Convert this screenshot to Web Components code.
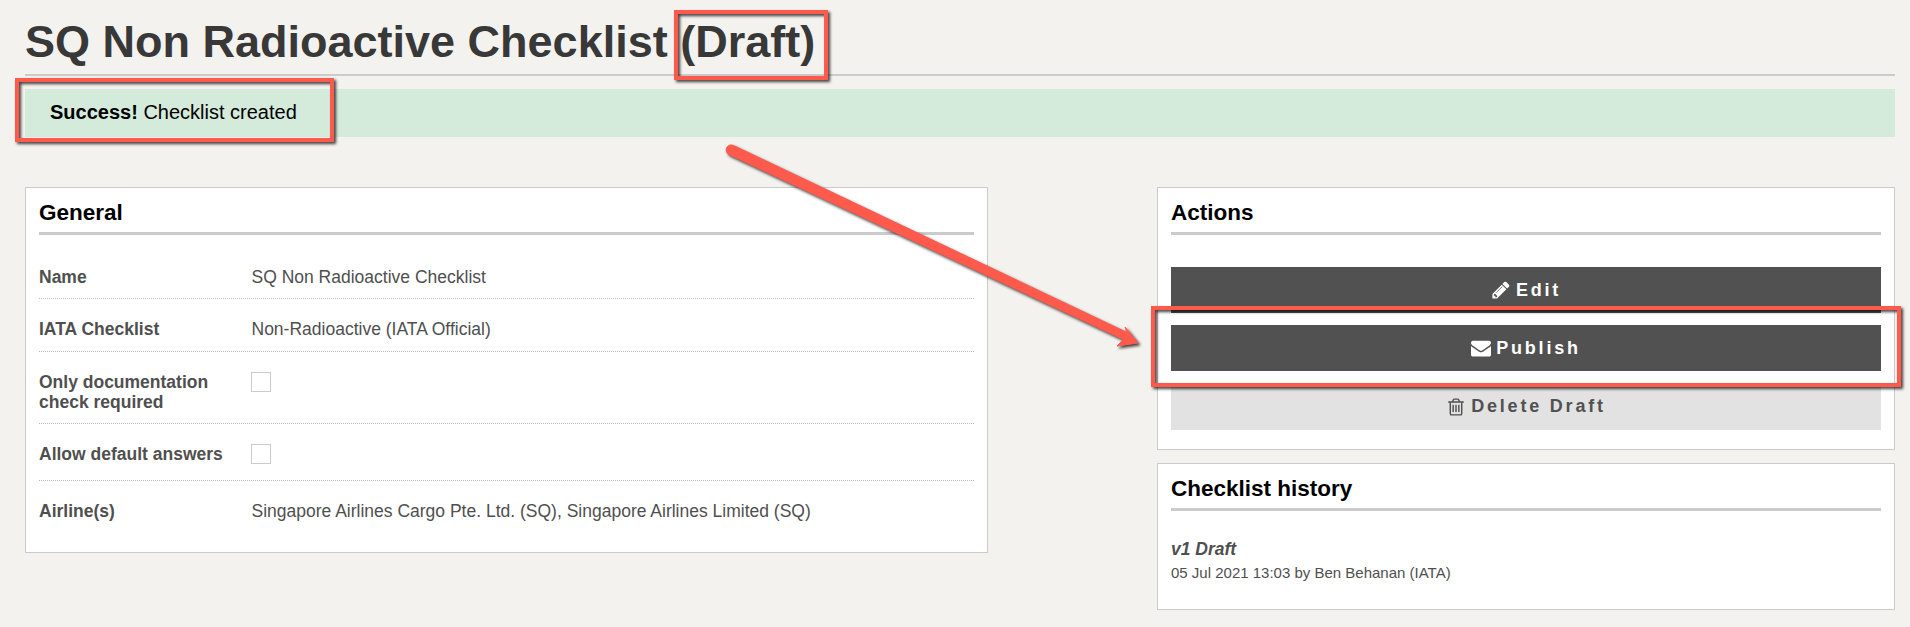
<!DOCTYPE html>
<html lang="en">
<head>
<meta charset="utf-8">
<title>SQ Non Radioactive Checklist</title>
<style>
  html, body { margin: 0; padding: 0; height: 627px; overflow: hidden; }
  body {
    background: #f3f2ee;
    font-family: "Liberation Sans", Arial, sans-serif;
    color: #4f4f4f;
    font-size: 16px;
  }
</style>
</head>
<body>
<checklist-page>
  <page-title>SQ Non Radioactive Checklist (Draft)</page-title>
  <alert-box><b>Success!</b> Checklist created</alert-box>

  <panel-card slot="left" heading="General">
    <detail-row label="Name" tight>SQ Non Radioactive Checklist</detail-row>
    <detail-row label="IATA Checklist">Non-Radioactive (IATA Official)</detail-row>
    <detail-row label="Only documentation check required" tight><check-box></check-box></detail-row>
    <detail-row label="Allow default answers" tall><check-box></check-box></detail-row>
    <detail-row label="Airline(s)" last>Singapore Airlines Cargo Pte. Ltd. (SQ), Singapore Airlines Limited (SQ)</detail-row>
  </panel-card>

  <panel-card slot="right" heading="Actions">
    <div style="height:20px"></div>
    <action-button icon="pencil">Edit</action-button>
    <action-button icon="envelope">Publish</action-button>
    <action-button icon="trash" kind="light">Delete Draft</action-button>
  </panel-card>

  <panel-card slot="right" heading="Checklist history">
    <history-entry version="v1 Draft">05 Jul 2021 13:03 by Ben Behanan (IATA)</history-entry>
  </panel-card>
</checklist-page>
<screenshot-marks></screenshot-marks>

<script>
// Font Awesome 4 style glyphs, viewBox 0 0 1792 1792
const ICONS = {
  pencil: 'M491 1536l91-91-235-235-91 91v107h128v128h107zm523-928q0-22-22-22-10 0-17 7l-542 542q-7 7-7 17 0 22 22 22 10 0 17-7l542-542q7-7 7-17zm-54-192l416 416-832 832h-416v-416zm683 96q0 53-37 90l-166 166-416-416 166-165q36-38 90-38 53 0 91 38l235 234q37 39 37 91z',
  envelope: 'M1792 710v794q0 66-47 113t-113 47h-1472q-66 0-113-47t-47-113v-794q44 49 101 87 362 246 497 345 57 42 92.5 65.5t94.5 48 110 24.5h2q51 0 110-24.5t94.5-48 92.5-65.5q170-123 498-345 57-39 100-87zm0-294q0 79-49 151t-122 123q-376 261-468 325-10 7-42.5 30.5t-54 38-52 32.5-57.5 27-50 9h-2q-23 0-50-9t-57.5-27-52-32.5-54-38-42.5-30.5q-91-64-262-182.5t-205-142.5q-62-42-117-115.5t-55-136.5q0-78 41.5-130t118.5-52h1472q65 0 112.5 47t47.5 113z',
  trash: 'M704 736v576q0 14-9 23t-23 9h-64q-14 0-23-9t-9-23v-576q0-14 9-23t23-9h64q14 0 23 9t9 23zm256 0v576q0 14-9 23t-23 9h-64q-14 0-23-9t-9-23v-576q0-14 9-23t23-9h64q14 0 23 9t9 23zm256 0v576q0 14-9 23t-23 9h-64q-14 0-23-9t-9-23v-576q0-14 9-23t23-9h64q14 0 23 9t9 23zm128 724v-948h-896v948q0 22 7 40.5t14.5 27 10.5 8.5h832q3 0 10.5-8.5t14.5-27 7-40.5zm-672-1076h448l-48-117q-7-9-17-11h-317q-10 2-17 11zm928 32v64q0 14-9 23t-23 9h-96v948q0 83-47 143.5t-113 60.5h-832q-66 0-113-58.5t-47-141.5v-952h-96q-14 0-23-9t-9-23v-64q0-14 9-23t23-9h309l70-167q15-37 54-63t79-26h320q40 0 79 26t54 63l70 167h309q14 0 23 9t9 23z'
};

class ChecklistPage extends HTMLElement {
  constructor() {
    super();
    this.attachShadow({ mode: 'open' });
    this.shadowRoot.innerHTML = `
      <style>
        :host { display: block; padding: 0 15px 0 25px; }
        .cols { display: grid; grid-template-columns: 963px 738px; justify-content: space-between; margin-top: 50px; }
        .col { display: flex; flex-direction: column; gap: 13px; align-items: stretch; }
      </style>
      <slot></slot>
      <div class="cols">
        <div class="col"><slot name="left"></slot></div>
        <div class="col"><slot name="right"></slot></div>
      </div>
    `;
  }
}

class PageTitle extends HTMLElement {
  constructor() {
    super();
    this.attachShadow({ mode: 'open' });
    this.shadowRoot.innerHTML = `
      <style>
        :host {
          display: block;
          height: 74px;
          border-bottom: 2px solid #cbcbcb;
          font-size: 45px;
          font-weight: bold;
          line-height: 84px;
          color: #383838;
          white-space: nowrap;
        }
      </style>
      <slot></slot>
    `;
  }
}

class AlertBox extends HTMLElement {
  constructor() {
    super();
    this.attachShadow({ mode: 'open' });
    this.shadowRoot.innerHTML = `
      <style>
        :host {
          display: block;
          margin-top: 13px;
          height: 48px;
          padding-left: 25px;
          background: #d4ebdb;
          color: #000;
          font-size: 20px;
          line-height: 47px;
        }
      </style>
      <slot></slot>
    `;
  }
}

class PanelCard extends HTMLElement {
  constructor() {
    super();
    this.attachShadow({ mode: 'open' });
    this.shadowRoot.innerHTML = `
      <style>
        :host {
          display: block;
          box-sizing: border-box;
          background: #fff;
          border: 1px solid #cbcbcb;
          padding: 0 13px 19px;
        }
        h2 {
          margin: 0 0 12px;
          height: 44px;
          font-size: 22.5px;
          line-height: 49px;
          font-weight: bold;
          color: #000;
          border-bottom: 3px solid #cbcbcb;
        }
      </style>
      <h2></h2>
      <slot></slot>
    `;
    this.shadowRoot.querySelector('h2').textContent = this.getAttribute('heading');
  }
}

class DetailRow extends HTMLElement {
  constructor() {
    super();
    this.attachShadow({ mode: 'open' });
    this.shadowRoot.innerHTML = `
      <style>
        :host {
          display: grid;
          grid-template-columns: 212.5px 1fr;
          padding: 20px 0 12px;
          border-bottom: 1px dotted #bdbdbd;
          font-size: 17.5px;
          line-height: 20px;
          color: #4f4f4f;
        }
        :host([last]) { border-bottom: 0; }
        :host([tall]) { padding-bottom: 16px; }
        :host([tight]) { padding-bottom: 11px; }
        .label { font-weight: bold; padding-right: 10px; }
      </style>
      <div class="label"></div>
      <div><slot></slot></div>
    `;
    this.shadowRoot.querySelector('.label').textContent = this.getAttribute('label');
  }
}

class CheckBox extends HTMLElement {
  constructor() {
    super();
    this.attachShadow({ mode: 'open' });
    this.shadowRoot.innerHTML = `
      <style>
        :host {
          display: block;
          box-sizing: border-box;
          width: 20px;
          height: 20px;
          margin-left: -0.5px;
          background: #fff;
          border: 1px solid #cbcbcb;
        }
      </style>
    `;
  }
}

class ActionButton extends HTMLElement {
  constructor() {
    super();
    this.attachShadow({ mode: 'open' });
    this.shadowRoot.innerHTML = `
      <style>
        :host {
          display: flex;
          align-items: center;
          justify-content: center;
          gap: 5px;
          height: 46px;
          margin-bottom: 12px;
          background: #515151;
          color: #fff;
          font-size: 18px;
          font-weight: bold;
          letter-spacing: 2.8px;
          white-space: nowrap;
        }
        :host([kind="light"]) { height: 47px; background: #e2e2e2; color: #515151; margin-bottom: 0; }
        svg { width: 20px; height: 20px; fill: currentColor; flex: none; }
      </style>
      <svg viewBox="0 0 1792 1792" aria-hidden="true"><path d="${ICONS[this.getAttribute('icon')]}"/></svg>
      <span><slot></slot></span>
    `;
  }
}

class HistoryEntry extends HTMLElement {
  constructor() {
    super();
    this.attachShadow({ mode: 'open' });
    this.shadowRoot.innerHTML = `
      <style>
        :host { display: block; padding: 14px 0 5px; }
        .version { font-size: 17.5px; line-height: 24px; font-weight: bold; font-style: italic; color: #4f4f4f; }
        .meta { font-size: 15px; line-height: 24px; color: #4f4f4f; }
      </style>
      <div class="version"></div>
      <div class="meta"><slot></slot></div>
    `;
    this.shadowRoot.querySelector('.version').textContent = this.getAttribute('version');
  }
}

// The red boxes and the arrow drawn on top of the screenshot
class ScreenshotMarks extends HTMLElement {
  constructor() {
    super();
    this.attachShadow({ mode: 'open' });
    this.shadowRoot.innerHTML = `
      <style>
        :host { position: absolute; left: 0; top: 0; width: 1910px; height: 627px; pointer-events: none; }
        svg { display: block; overflow: visible; }
        .mark { filter: drop-shadow(2px 2px 1.5px rgba(0,0,0,.75)); }
        rect { fill: none; stroke: #ff5a4c; stroke-width: 4; }
        path { fill: #ff5a4c; stroke: #ff5a4c; stroke-width: 1; stroke-linejoin: round; }
      </style>
      <svg width="1910" height="627" viewBox="0 0 1910 627">
        <g class="mark"><rect x="676" y="12" width="150" height="66"/></g>
        <g class="mark"><rect x="17" y="80" width="315" height="60"/></g>
        <g class="mark"><rect x="1153" y="308" width="746" height="77"/></g>
        <g class="mark">
          <path d="M733.3 145.4 L1127 332.5 L1125 327 L1138 343 L1117 346 L1123.5 339.5 L729 154.5 A5 5 0 0 1 733.3 145.4 Z"/>
        </g>
      </svg>
    `;
  }
}

customElements.define('checklist-page', ChecklistPage);
customElements.define('page-title', PageTitle);
customElements.define('alert-box', AlertBox);
customElements.define('panel-card', PanelCard);
customElements.define('detail-row', DetailRow);
customElements.define('check-box', CheckBox);
customElements.define('action-button', ActionButton);
customElements.define('history-entry', HistoryEntry);
customElements.define('screenshot-marks', ScreenshotMarks);
</script>
</body>
</html>
